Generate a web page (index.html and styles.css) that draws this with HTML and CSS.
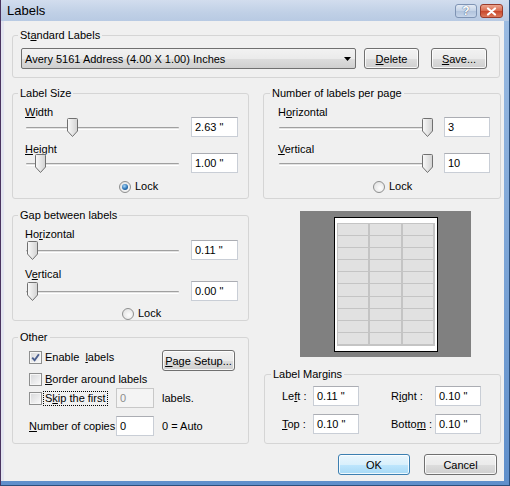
FILE: index.html
```html
<!DOCTYPE html>
<html>
<head>
<meta charset="utf-8">
<title>Labels</title>
<link rel="stylesheet" href="styles.css">
</head>
<body>
<div class="window">
  <div class="titlebar">
    <span class="title">Labels</span>
    <div class="caption-btns">
      <span class="cbtn help">?</span>
      <span class="cbtn close"><svg width="11" height="9" viewBox="0 0 11 9"><path d="M2 1.5l7 6M9 1.5l-7 6" stroke="#fff" stroke-width="2.2" stroke-linecap="round"/></svg></span>
    </div>
  </div>
  <div class="client">
    <fieldset class="group std">
      <legend>St<u>a</u>ndard Labels</legend>
      <div class="std-body">
        <div class="combo"><span>Avery 5161 Address (4.00 X 1.00) Inches</span><svg width="7" height="4" viewBox="0 0 7 4"><path d="M0 0h7l-3.5 4z" fill="#000"/></svg></div>
        <button class="btn del"><u>D</u>elete</button>
        <button class="btn save"><u>S</u>ave...</button>
      </div>
    </fieldset>

    <div class="cols">
      <div class="col">
        <fieldset class="group size">
          <legend>Label Size</legend>
          <div class="sliders">
            <span class="sl-label l1"><u>W</u>idth</span>
            <div class="sl-row r1">
              <div class="slider"><div class="track"></div><svg class="thumb" style="left:42px" width="11" height="19" viewBox="0 0 11 19"><defs><linearGradient id="tg" x1="0" x2="1"><stop offset="0" stop-color="#fafafa"/><stop offset="1" stop-color="#d2d2d2"/></linearGradient></defs><path d="M1.5 .5h8a1 1 0 0 1 1 1v11.5l-5 5.5l-5-5.5v-11.5a1 1 0 0 1 1-1z" fill="url(#tg)" stroke="#707070"/></svg></div>
              <div class="tb">2.63 "</div>
            </div>
            <span class="sl-label l2"><u>H</u>eight</span>
            <div class="sl-row r2">
              <div class="slider"><div class="track"></div><svg class="thumb" style="left:10px" width="11" height="19" viewBox="0 0 11 19"><path d="M1.5 .5h8a1 1 0 0 1 1 1v11.5l-5 5.5l-5-5.5v-11.5a1 1 0 0 1 1-1z" fill="url(#tg)" stroke="#707070"/></svg></div>
              <div class="tb">1.00 "</div>
            </div>
            <div class="lock"><span class="radio checked"></span><span>Lock</span></div>
          </div>
        </fieldset>

        <fieldset class="group gap">
          <legend>Gap between labels</legend>
          <div class="sliders">
            <span class="sl-label l1">Ho<u>r</u>izontal</span>
            <div class="sl-row r1">
              <div class="slider"><div class="track"></div><svg class="thumb" style="left:2px" width="11" height="19" viewBox="0 0 11 19"><path d="M1.5 .5h8a1 1 0 0 1 1 1v11.5l-5 5.5l-5-5.5v-11.5a1 1 0 0 1 1-1z" fill="url(#tg)" stroke="#707070"/></svg></div>
              <div class="tb">0.11 "</div>
            </div>
            <span class="sl-label l2">V<u>e</u>rtical</span>
            <div class="sl-row r2">
              <div class="slider"><div class="track"></div><svg class="thumb" style="left:2px" width="11" height="19" viewBox="0 0 11 19"><path d="M1.5 .5h8a1 1 0 0 1 1 1v11.5l-5 5.5l-5-5.5v-11.5a1 1 0 0 1 1-1z" fill="url(#tg)" stroke="#707070"/></svg></div>
              <div class="tb">0.00 "</div>
            </div>
            <div class="lock"><span class="radio"></span><span>Lock</span></div>
          </div>
        </fieldset>

        <fieldset class="group other">
          <legend>Other</legend>
          <div class="other-body">
            <label class="cb-label row1"><span class="checkbox checked"><svg width="9" height="9" viewBox="0 0 9 9"><path d="M1.2 4.6l2.4 2.6l4.3-6" stroke="#4b5f8f" stroke-width="1.9" fill="none"/></svg></span><span class="cb-text">Enable &nbsp;<u>l</u>abels</span></label>
            <button class="btn setup"><u>P</u>age Setup...</button>
            <label class="cb-label row2"><span class="checkbox"></span><span class="cb-text"><u>B</u>order around labels</span></label>
            <label class="cb-label row3"><span class="checkbox"></span><span class="cb-text focus">S<u>k</u>ip the first</span></label>
            <div class="tb small disabled">0</div>
            <span class="after">labels.</span>
            <span class="copies r4"><u>N</u>umber of copies</span>
            <div class="tb small r4">0</div>
            <span class="after r4">0 = Auto</span>
          </div>
        </fieldset>
      </div>

      <div class="col">
        <fieldset class="group count">
          <legend>Number of labels per page</legend>
          <div class="sliders">
            <span class="sl-label l1">H<u>o</u>rizontal</span>
            <div class="sl-row r1">
              <div class="slider"><div class="track"></div><svg class="thumb" style="left:144px" width="11" height="19" viewBox="0 0 11 19"><path d="M1.5 .5h8a1 1 0 0 1 1 1v11.5l-5 5.5l-5-5.5v-11.5a1 1 0 0 1 1-1z" fill="url(#tg)" stroke="#707070"/></svg></div>
              <div class="tb">3</div>
            </div>
            <span class="sl-label l2"><u>V</u>ertical</span>
            <div class="sl-row r2">
              <div class="slider"><div class="track"></div><svg class="thumb" style="left:144px" width="11" height="19" viewBox="0 0 11 19"><path d="M1.5 .5h8a1 1 0 0 1 1 1v11.5l-5 5.5l-5-5.5v-11.5a1 1 0 0 1 1-1z" fill="url(#tg)" stroke="#707070"/></svg></div>
              <div class="tb">10</div>
            </div>
            <div class="lock"><span class="radio"></span><span>Lock</span></div>
          </div>
        </fieldset>

        <div class="preview">
          <div class="page">
            <div class="sheet">
              <i></i><i></i><i></i><i></i><i></i><i></i><i></i><i></i><i></i><i></i>
              <i></i><i></i><i></i><i></i><i></i><i></i><i></i><i></i><i></i><i></i>
              <i></i><i></i><i></i><i></i><i></i><i></i><i></i><i></i><i></i><i></i>
            </div>
          </div>
        </div>

        <fieldset class="group margins">
          <legend>Label Margins</legend>
          <div class="margins-body">
            <span class="m-lab c1">Le<u>f</u>t :</span>
            <div class="tb c2">0.11 "</div>
            <span class="m-lab c4">R<u>i</u>ght :</span>
            <div class="tb c5">0.10 "</div>
            <span class="m-lab c1"><u>T</u>op :</span>
            <div class="tb c2">0.10 "</div>
            <span class="m-lab c4">Botto<u>m</u> :</span>
            <div class="tb c5">0.10 "</div>
          </div>
        </fieldset>
      </div>
    </div>

    <div class="actions">
      <button class="btn ok">OK</button>
      <button class="btn cancel">Cancel</button>
    </div>
  </div>
</div>
</body>
</html>
```

FILE: styles.css
```css
* { box-sizing: border-box; }
html, body { margin: 0; padding: 0; }
body {
  width: 510px;
  height: 486px;
  overflow: hidden;
  font-family: "Liberation Sans", Arial, sans-serif;
  font-size: 11px;
  color: #000;
}
.window {
  width: 510px;
  height: 486px;
  display: flex;
  flex-direction: column;
  background: linear-gradient(#9dbde3, #5f8fcb);
  border-left: 1px solid #4a3460;
  border-right: 1px solid #2b4f7c;
  border-bottom: 1px solid #2b4f7c;
}
.titlebar {
  height: 21px;
  flex: none;
  display: flex;
  align-items: center;
  justify-content: space-between;
  padding: 0 6px 0 6px;
  background: linear-gradient(#d2ddee, #c0d0e6 60%, #b8cae3);
}
.title { font-size: 13px; line-height: 15px; }
.caption-btns { display: flex; gap: 3px; margin-top: 1px; }
.cbtn {
  width: 22px;
  height: 14px;
  border-radius: 3px;
  display: flex;
  align-items: center;
  justify-content: center;
}
.help {
  background: linear-gradient(#e3eaf4, #c3d2e6 50%, #b1c3dc 51%, #c6d5ea);
  border: 1px solid #7f94b4;
  color: #fff;
  font-weight: bold;
  font-size: 12px;
  text-shadow: 0 0 1px #4d6285, 0 0 1px #4d6285;
}
.close {
  width: 23px;
  background: linear-gradient(#eba58f, #d96a4e 50%, #c8462a 51%, #dc7a5c);
  border: 1px solid #9a3b2a;
}
.client {
  flex: 1;
  margin: 0 5px 4px 0;
  border-left: 3px solid #e3e5f0;
  background: #f0f0f0;
  padding: 8px 4px 6px 8px;
  display: flex;
  flex-direction: column;
}
.group {
  margin: 0;
  padding: 0;
  border: 1px solid #d5d5d5;
  border-radius: 3px;
  min-width: 0;
}
.group > legend {
  padding: 0 2px;
  margin-left: 5px;
  line-height: 12px;
  height: 12px;
}
.count > legend, .margins > legend { margin-left: 6px; }

.std-body { display: flex; padding: 7px 0 8px 8px; }
.combo {
  width: 335px;
  height: 21px;
  margin-right: 8px;
  border: 1px solid #707070;
  border-radius: 2px;
  background: linear-gradient(#f2f2f2, #ebebeb 50%, #dddddd 51%, #cfcfcf);
  display: flex;
  align-items: center;
  justify-content: space-between;
  padding: 0 4px 0 3px;
}
.btn {
  font-family: inherit;
  font-size: 11px;
  color: #000;
  height: 21px;
  padding: 0;
  border: 1px solid #707070;
  border-radius: 3px;
  background: linear-gradient(#f2f2f2, #ebebeb 50%, #dddddd 51%, #cfcfcf);
  box-shadow: inset 0 0 0 1px rgba(255,255,255,0.8);
}
.del { width: 55px; margin-right: 12px; }
.save { width: 56px; }

.cols { display: flex; gap: 14px; margin-top: 9px; }
.col { width: 237px; display: flex; flex-direction: column; }
.col + .col { width: 238px; }
.gap, .other { margin-top: 10px; }

.sliders { display: flex; flex-direction: column; padding: 0 10px 5px 12px; }
.count .sliders { padding-left: 14px; }
.sl-label { line-height: 13px; height: 13px; }
.sl-row { display: flex; gap: 11px; height: 20px; }
.size .l1, .count .l1 { margin-top: 7px; }
.size .r1, .count .r1 { margin-top: -2px; }
.size .l2, .count .l2 { margin-top: 6px; }
.size .r2, .count .r2 { margin-top: -3px; }
.size .lock, .count .lock { margin-top: 7px; }
.gap .sliders { padding-bottom: 0; }
.gap .l1 { margin-top: 7px; }
.gap .r1 { margin-top: -1px; }
.gap .l2 { margin-top: 8px; }
.gap .r2 { margin-top: 0; }
.gap .lock { margin-top: 6px; }

.slider { position: relative; width: 155px; height: 20px; flex: none; }
.track {
  position: absolute;
  left: 1px;
  right: 1px;
  top: 10px;
  height: 3px;
  border-top: 1px solid #a0a0a0;
  border-bottom: 1px solid #ffffff;
  background: #e3e3e3;
  border-radius: 1px;
}
.thumb { position: absolute; top: 1px; }

.tb {
  width: 47px;
  height: 20px;
  background: #fff;
  border: 1px solid #c9ced6;
  border-top-color: #abadb3;
  padding: 0 3px;
  line-height: 18px;
}
.count .tb { width: 46px; }
.tb.small { width: 38px; }
.tb.disabled { background: #f4f4f4; color: #8d8d8d; border-color: #c8c8c8; }

.lock { display: flex; align-items: center; gap: 4px; height: 13px; line-height: 13px; margin-left: 94px; }
.count .lock { margin-left: 95px; }
.gap .lock { margin-left: 97px; }
.radio {
  width: 12px;
  height: 12px;
  border-radius: 50%;
  border: 1px solid #8e8f8f;
  background: radial-gradient(circle at 60% 60%, #fdfdfd, #dcdcdc);
  display: flex;
  align-items: center;
  justify-content: center;
}
.radio.checked::after {
  content: "";
  width: 6px;
  height: 6px;
  border-radius: 50%;
  background: radial-gradient(circle at 40% 35%, #a9d7f7, #2a72b5 55%, #0e3d6e);
}

.other-body {
  display: grid;
  grid-template-columns: 87px 38px 8px auto;
  grid-template-rows: 21px 17px 20px auto;
  align-items: center;
  padding: 7px 0 7px 16px;
}
.cb-label { display: flex; align-items: center; gap: 2px; line-height: 13px; }
.cb-label.row1 { grid-column: 1 / 4; grid-row: 1; align-self: start; margin-top: 1px; }
.cb-label.row2 { grid-column: 1 / 5; grid-row: 2; }
.cb-label.row3 { grid-column: 1; grid-row: 3; }
.setup { grid-column: 4; grid-row: 1; width: 73px; align-self: start; }
.checkbox {
  width: 13px;
  height: 13px;
  flex: none;
  border: 1px solid #8e8f8f;
  background: linear-gradient(135deg, #d6d7d9, #fbfbfb);
  box-shadow: inset 0 0 0 1px #f6f6f6;
  display: flex;
  align-items: center;
  justify-content: center;
}
.cb-text { padding: 0 1px; }
.cb-text.focus { outline: 1px dotted #000; outline-offset: 0; }
.after { grid-column: 4; }
.copies { grid-column: 1; }
.r4 { margin-top: 8px; grid-row: 4; }

.preview {
  width: 171px;
  height: 146px;
  margin: 12px 0 0 37px;
  background: #808080;
  display: flex;
  align-items: center;
  justify-content: center;
}
.page {
  width: 104px;
  height: 135px;
  background: #fff;
  border: 1px solid #000;
  padding: 5px 2px;
}
.sheet {
  height: 100%;
  display: grid;
  grid-template-columns: repeat(3, 1fr);
  grid-template-rows: repeat(10, 1fr);
  grid-auto-flow: column;
  column-gap: 2px;
  row-gap: 1px;
  padding: 1px;
  background: #c4c4c4;
}
.sheet i { background: #e1e1e1; }

.margins { margin-top: 11px; margin-left: 1px; }
.margins-body {
  display: grid;
  grid-template-columns: 31px 46px 32px 44px 46px;
  grid-template-rows: 20px 20px;
  row-gap: 8px;
  align-items: center;
  padding: 6px 0 9px 17px;
}
.c1 { grid-column: 1; }
.c2 { grid-column: 2; width: 46px; }
.c4 { grid-column: 4; }
.c5 { grid-column: 5; width: 46px; }

.actions { display: flex; justify-content: flex-end; gap: 14px; margin: 10px 3px 0 0; }
.ok {
  width: 72px;
  border-color: #3c7fb1;
  background: linear-gradient(#eaf6fd, #d9f0fc 50%, #bee6fd 51%, #a7d9f5);
}
.cancel { width: 73px; }
```
